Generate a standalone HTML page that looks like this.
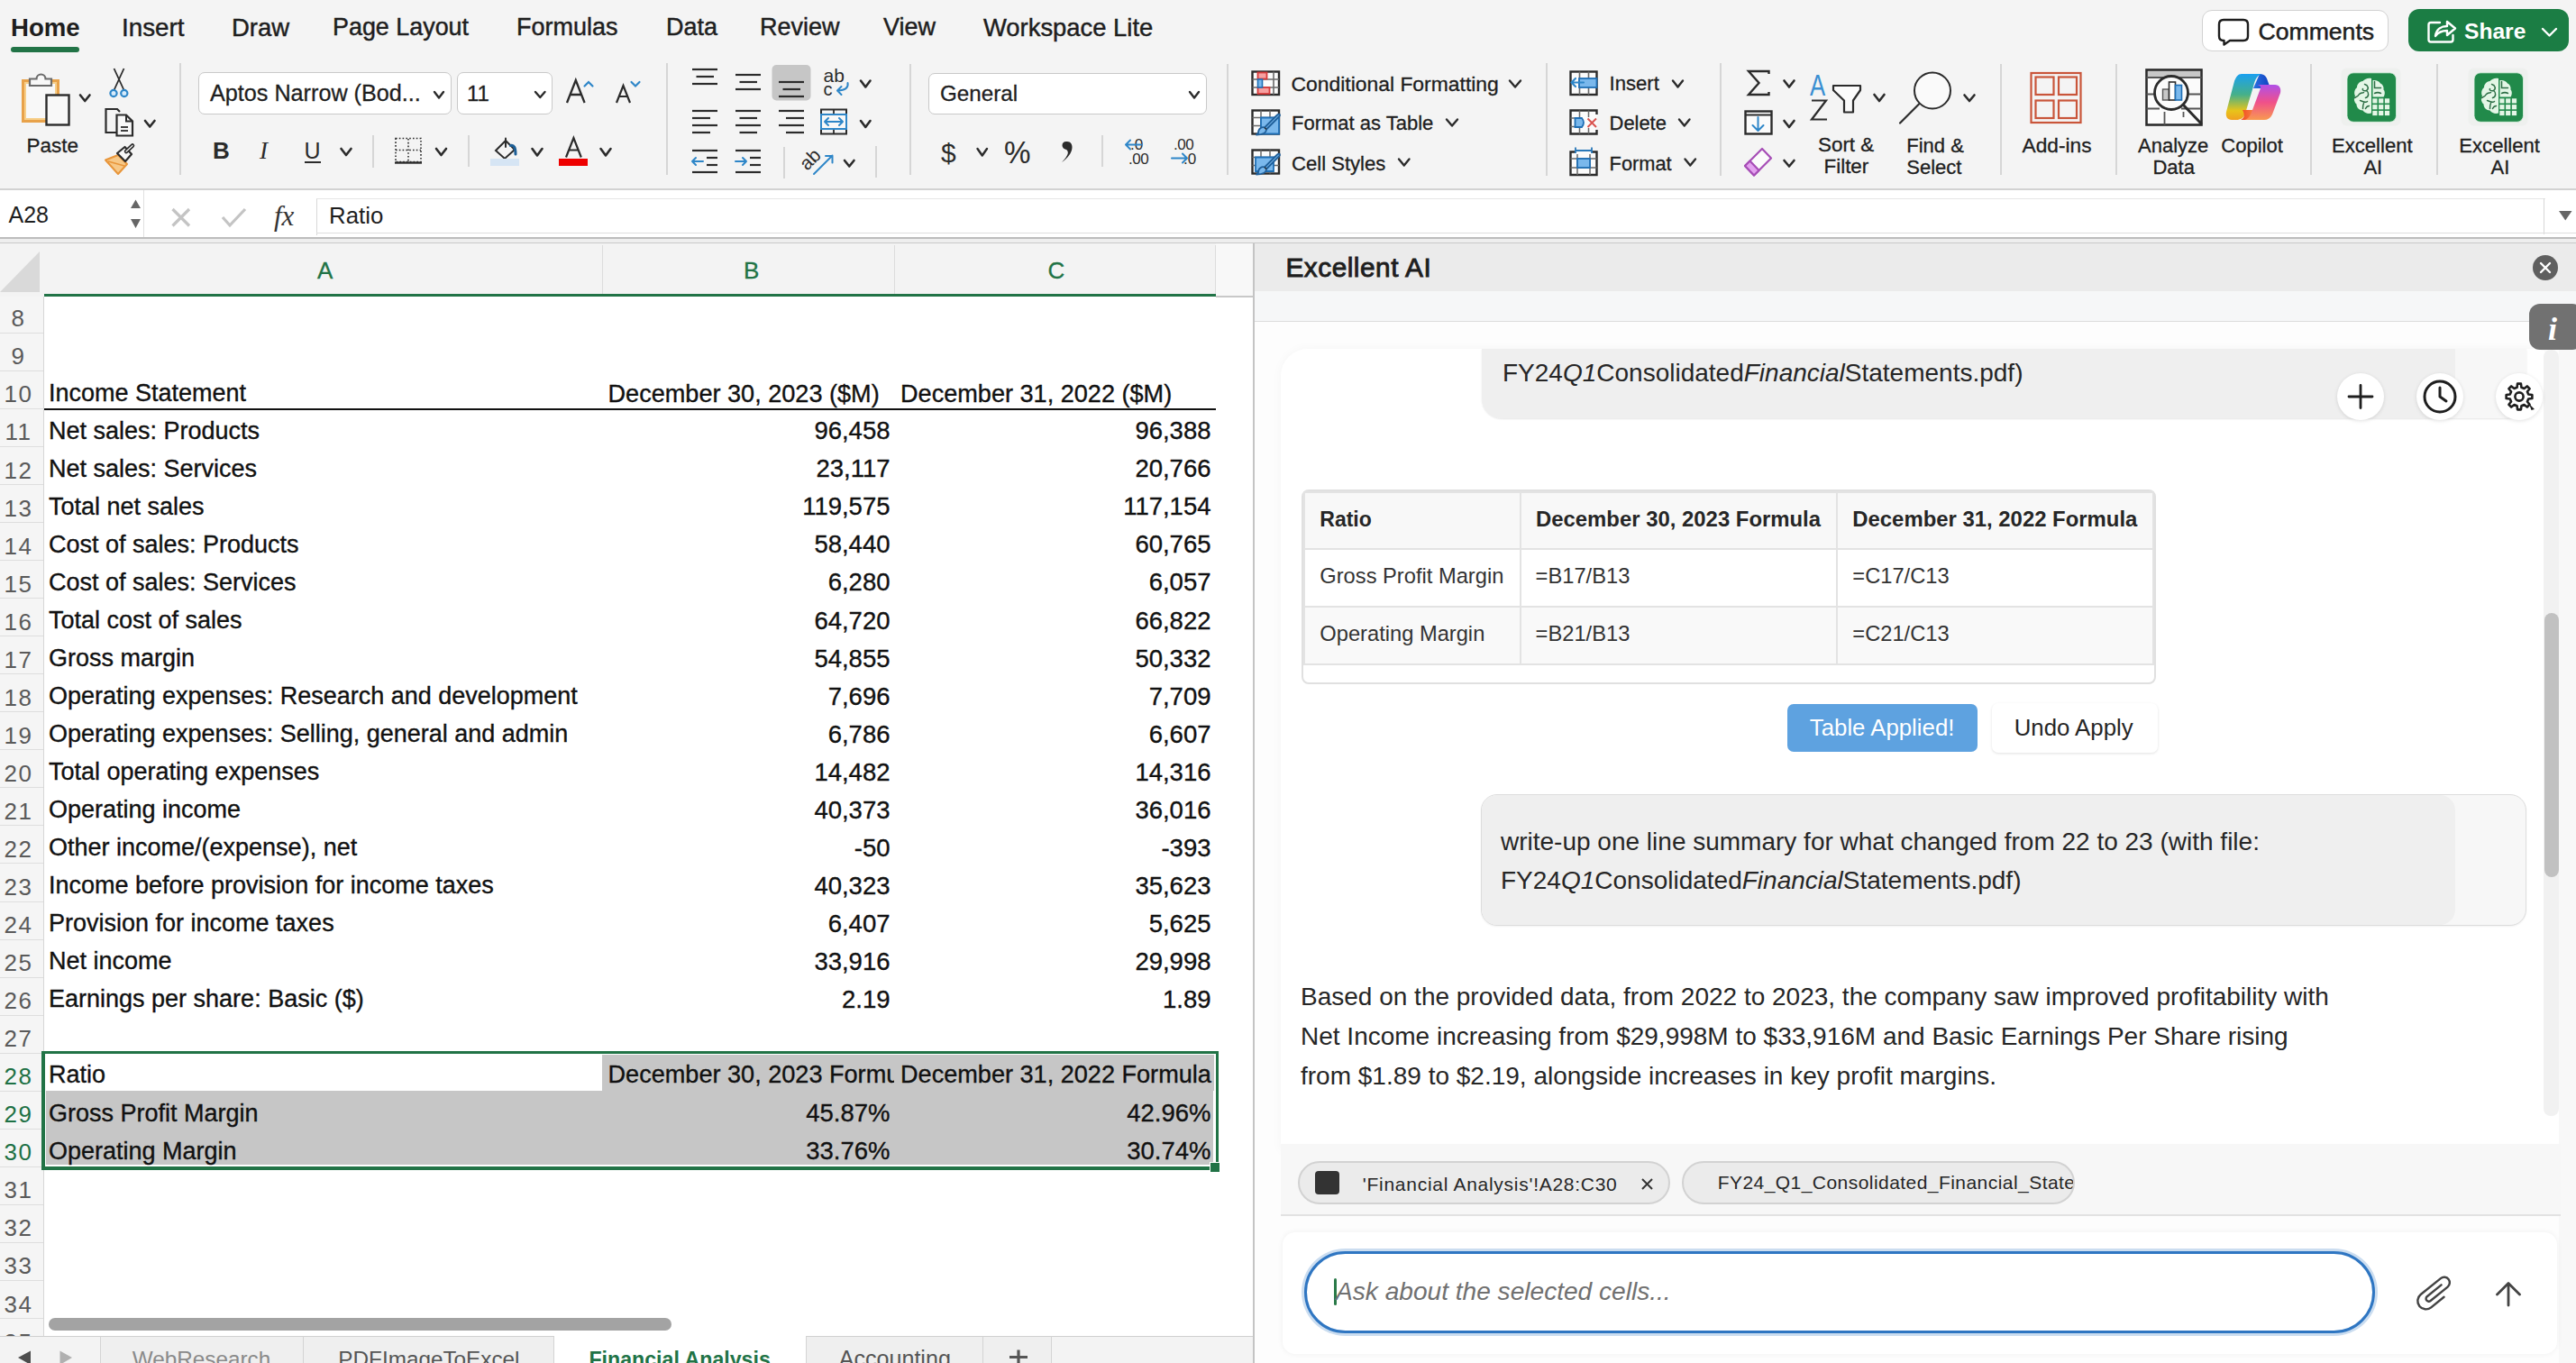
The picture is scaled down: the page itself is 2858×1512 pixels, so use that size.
<!DOCTYPE html><html><head><meta charset="utf-8"><style>
html,body{margin:0;padding:0;}
body{width:2858px;height:1512px;overflow:hidden;position:relative;background:#f4f4f4;font-family:"Liberation Sans",sans-serif;}
.t{position:absolute;white-space:nowrap;}
.r{position:absolute;}
svg.r{overflow:visible;}
</style></head><body>
<div class="t" style="left:12.0px;top:16.6px;font-size:27.6px;line-height:27.6px;color:#1e1e1e;font-weight:bold;font-style:normal;">Home</div>
<div class="t" style="left:135.0px;top:16.5px;font-size:27.8px;line-height:27.8px;color:#1e1e1e;font-weight:normal;font-style:normal;-webkit-text-stroke:0.45px #1e1e1e">Insert</div>
<div class="t" style="left:257.0px;top:16.7px;font-size:27.5px;line-height:27.5px;color:#1e1e1e;font-weight:normal;font-style:normal;-webkit-text-stroke:0.45px #1e1e1e">Draw</div>
<div class="t" style="left:369.0px;top:17.2px;font-size:26.9px;line-height:26.9px;color:#1e1e1e;font-weight:normal;font-style:normal;-webkit-text-stroke:0.45px #1e1e1e">Page Layout</div>
<div class="t" style="left:573.0px;top:17.1px;font-size:27px;line-height:27px;color:#1e1e1e;font-weight:normal;font-style:normal;-webkit-text-stroke:0.45px #1e1e1e">Formulas</div>
<div class="t" style="left:739.0px;top:17.1px;font-size:27px;line-height:27px;color:#1e1e1e;font-weight:normal;font-style:normal;-webkit-text-stroke:0.45px #1e1e1e">Data</div>
<div class="t" style="left:843.0px;top:17.1px;font-size:27px;line-height:27px;color:#1e1e1e;font-weight:normal;font-style:normal;-webkit-text-stroke:0.45px #1e1e1e">Review</div>
<div class="t" style="left:980.0px;top:17.1px;font-size:27px;line-height:27px;color:#1e1e1e;font-weight:normal;font-style:normal;-webkit-text-stroke:0.45px #1e1e1e">View</div>
<div class="t" style="left:1091.0px;top:16.8px;font-size:27.4px;line-height:27.4px;color:#1e1e1e;font-weight:normal;font-style:normal;-webkit-text-stroke:0.45px #1e1e1e">Workspace Lite</div>
<div class="r" style="left:12px;top:52px;width:76px;height:6px;background:#217346;border-radius:3px"></div>
<div class="r" style="left:199px;top:70px;width:2px;height:124px;background:#d6d6d6"></div>
<div class="r" style="left:739px;top:70px;width:2px;height:124px;background:#d6d6d6"></div>
<div class="r" style="left:1009px;top:71px;width:2px;height:123px;background:#d6d6d6"></div>
<div class="r" style="left:1361px;top:71px;width:2px;height:123px;background:#d6d6d6"></div>
<div class="r" style="left:1715px;top:70px;width:2px;height:125px;background:#d6d6d6"></div>
<div class="r" style="left:1908px;top:70px;width:2px;height:125px;background:#d6d6d6"></div>
<div class="r" style="left:2219px;top:71px;width:2px;height:123px;background:#d6d6d6"></div>
<div class="r" style="left:2347px;top:71px;width:2px;height:123px;background:#d6d6d6"></div>
<div class="r" style="left:2563px;top:71px;width:2px;height:123px;background:#d6d6d6"></div>
<div class="r" style="left:2703px;top:71px;width:2px;height:123px;background:#d6d6d6"></div>
<div class="r" style="left:413px;top:150px;width:2px;height:36px;background:#d6d6d6"></div>
<div class="r" style="left:519px;top:150px;width:2px;height:35px;background:#d6d6d6"></div>
<div class="r" style="left:869px;top:163px;width:2px;height:35px;background:#d6d6d6"></div>
<div class="r" style="left:971px;top:162px;width:2px;height:35px;background:#d6d6d6"></div>
<div class="r" style="left:1222px;top:150px;width:2px;height:35px;background:#d6d6d6"></div>
<div class="t" style="left:29.5px;top:150.5px;font-size:22.5px;line-height:22.5px;color:#1e1e1e;font-weight:normal;font-style:normal;-webkit-text-stroke:0.3px #1e1e1e">Paste</div>
<div class="r" style="left:220px;top:80px;width:281px;height:47px;background:#fff;border:1px solid #c9c9c9;border-radius:7px;box-sizing:border-box"></div>
<div class="t" style="left:233.0px;top:91.2px;font-size:25.2px;line-height:25.2px;color:#1e1e1e;font-weight:normal;font-style:normal;-webkit-text-stroke:0.3px #1e1e1e">Aptos Narrow (Bod...</div>
<div class="r" style="left:507px;top:80px;width:106px;height:47px;background:#fff;border:1px solid #c9c9c9;border-radius:7px;box-sizing:border-box"></div>
<div class="t" style="left:518.0px;top:91.7px;font-size:24px;line-height:24px;color:#1e1e1e;font-weight:normal;font-style:normal;-webkit-text-stroke:0.3px #1e1e1e">11</div>
<div class="r" style="left:1030px;top:81px;width:309px;height:46px;background:#fff;border:1px solid #c9c9c9;border-radius:7px;box-sizing:border-box"></div>
<div class="t" style="left:1043.0px;top:91.8px;font-size:24.2px;line-height:24.2px;color:#1e1e1e;font-weight:normal;font-style:normal;-webkit-text-stroke:0.3px #1e1e1e">General</div>
<div class="t" style="left:1432.5px;top:81.6px;font-size:22.9px;line-height:22.9px;color:#1e1e1e;font-weight:normal;font-style:normal;-webkit-text-stroke:0.3px #1e1e1e">Conditional Formatting</div>
<div class="t" style="left:1433.0px;top:126.0px;font-size:22px;line-height:22px;color:#1e1e1e;font-weight:normal;font-style:normal;-webkit-text-stroke:0.3px #1e1e1e">Format as Table</div>
<div class="t" style="left:1433.0px;top:170.5px;font-size:22.1px;line-height:22.1px;color:#1e1e1e;font-weight:normal;font-style:normal;-webkit-text-stroke:0.3px #1e1e1e">Cell Styles</div>
<div class="t" style="left:1785.6px;top:81.8px;font-size:22.1px;line-height:22.1px;color:#1e1e1e;font-weight:normal;font-style:normal;-webkit-text-stroke:0.3px #1e1e1e">Insert</div>
<div class="t" style="left:1785.6px;top:126.1px;font-size:21.9px;line-height:21.9px;color:#1e1e1e;font-weight:normal;font-style:normal;-webkit-text-stroke:0.3px #1e1e1e">Delete</div>
<div class="t" style="left:1785.6px;top:170.7px;font-size:21.8px;line-height:21.8px;color:#1e1e1e;font-weight:normal;font-style:normal;-webkit-text-stroke:0.3px #1e1e1e">Format</div>
<div class="t" style="left:2017.0px;top:150.2px;font-size:22.4px;line-height:22.4px;color:#1e1e1e;font-weight:normal;font-style:normal;-webkit-text-stroke:0.3px #1e1e1e">Sort &amp;</div>
<div class="t" style="left:2023.5px;top:174.2px;font-size:22.4px;line-height:22.4px;color:#1e1e1e;font-weight:normal;font-style:normal;-webkit-text-stroke:0.3px #1e1e1e">Filter</div>
<div class="t" style="left:2115.3px;top:150.9px;font-size:22px;line-height:22px;color:#1e1e1e;font-weight:normal;font-style:normal;-webkit-text-stroke:0.3px #1e1e1e">Find &amp;</div>
<div class="t" style="left:2115.3px;top:174.6px;font-size:22px;line-height:22px;color:#1e1e1e;font-weight:normal;font-style:normal;-webkit-text-stroke:0.3px #1e1e1e">Select</div>
<div class="t" style="left:2243.6px;top:150.3px;font-size:22.7px;line-height:22.7px;color:#1e1e1e;font-weight:normal;font-style:normal;-webkit-text-stroke:0.3px #1e1e1e">Add-ins</div>
<div class="t" style="left:2372.0px;top:150.9px;font-size:22px;line-height:22px;color:#1e1e1e;font-weight:normal;font-style:normal;-webkit-text-stroke:0.3px #1e1e1e">Analyze</div>
<div class="t" style="left:2388.4px;top:174.6px;font-size:22px;line-height:22px;color:#1e1e1e;font-weight:normal;font-style:normal;-webkit-text-stroke:0.3px #1e1e1e">Data</div>
<div class="t" style="left:2464.3px;top:150.9px;font-size:22px;line-height:22px;color:#1e1e1e;font-weight:normal;font-style:normal;-webkit-text-stroke:0.3px #1e1e1e">Copilot</div>
<div class="t" style="left:2587.0px;top:150.8px;font-size:22.1px;line-height:22.1px;color:#1e1e1e;font-weight:normal;font-style:normal;-webkit-text-stroke:0.3px #1e1e1e">Excellent</div>
<div class="t" style="left:2622.4px;top:174.6px;font-size:22px;line-height:22px;color:#1e1e1e;font-weight:normal;font-style:normal;-webkit-text-stroke:0.3px #1e1e1e">AI</div>
<div class="t" style="left:2728.3px;top:150.8px;font-size:22.1px;line-height:22.1px;color:#1e1e1e;font-weight:normal;font-style:normal;-webkit-text-stroke:0.3px #1e1e1e">Excellent</div>
<div class="t" style="left:2763.6px;top:174.6px;font-size:22px;line-height:22px;color:#1e1e1e;font-weight:normal;font-style:normal;-webkit-text-stroke:0.3px #1e1e1e">AI</div>
<div class="r" style="left:2443px;top:11px;width:207px;height:46px;background:#fff;border:1.5px solid #d2d2d2;border-radius:11px;box-sizing:border-box"></div>
<div class="t" style="left:2505.5px;top:22.0px;font-size:26.6px;line-height:26.6px;color:#1e1e1e;font-weight:normal;font-style:normal;-webkit-text-stroke:0.5px #1e1e1e">Comments</div>
<div class="r" style="left:2672px;top:10px;width:178px;height:47px;background:#1b7d44;border-radius:12px"></div>
<div class="t" style="left:2734.0px;top:22.8px;font-size:24.6px;line-height:24.6px;color:#ffffff;font-weight:bold;font-style:normal;">Share</div>
<div class="r" style="left:0px;top:209px;width:2858px;height:2px;background:#d2d2d2"></div>
<div class="r" style="left:0px;top:211px;width:2858px;height:52px;background:#ffffff"></div>
<div class="r" style="left:159px;top:211px;width:1px;height:52px;background:#e0e0e0"></div>
<div class="t" style="left:9.5px;top:226.3px;font-size:25px;line-height:25px;color:#1e1e1e;font-weight:normal;font-style:normal;">A28</div>
<div class="r" style="left:351px;top:220px;width:2472px;height:40px;background:#fff;border-left:1px solid #d8d8d8;border-top:1px solid #e6e6e6"></div>
<div class="t" style="left:365.0px;top:226.7px;font-size:25.8px;line-height:25.8px;color:#1e1e1e;font-weight:normal;font-style:normal;">Ratio</div>
<div class="r" style="left:2822px;top:220px;width:1px;height:40px;background:#d8d8d8"></div>
<div class="r" style="left:351px;top:258px;width:2507px;height:1px;background:#dedede"></div>
<svg class="r" style="left:0;top:0" width="2858" height="262"><rect x="25.5" y="89.5" width="39" height="45" fill="#f8f8f8" stroke="#e8a24a" stroke-width="3"/><rect x="28" y="92" width="34" height="40" fill="none" stroke="#f7cf8a" stroke-width="2"/><path d="M33 95 V87.5 H40.5 A5 5 0 0 1 50.5 87.5 H57 V95 Z" fill="#f8f8f8" stroke="#6b6b6b" stroke-width="2.2"/><rect x="51.5" y="105.5" width="25" height="33" fill="#f8f8f8" stroke="#2b2b2b" stroke-width="2.4"/><path d="M89 105.5 L94.25 112 L99.5 105.5" fill="none" stroke="#2b2b2b" stroke-width="2.6" stroke-linecap="round" stroke-linejoin="round"/><line x1="126.5" y1="76" x2="137.5" y2="100" stroke="#2b2b2b" stroke-width="1.8" stroke-linecap="butt"/><line x1="137.5" y1="76" x2="126.5" y2="100" stroke="#2b2b2b" stroke-width="1.8" stroke-linecap="butt"/><circle cx="126" cy="103.5" r="3.6" fill="#d7ebfb" stroke="#2e86c8" stroke-width="2.2"/><circle cx="137.8" cy="103.5" r="3.6" fill="#d7ebfb" stroke="#2e86c8" stroke-width="2.2"/><path d="M129 147 H117.5 V121 H130 L133 124" fill="none" stroke="#2b2b2b" stroke-width="2.2"/><path d="M129.5 127.5 H140 L147 134.5 V150.5 H129.5 Z" fill="#f8f8f8" stroke="#2b2b2b" stroke-width="2.2"/><path d="M140 127.5 V134.5 H147" fill="none" stroke="#2b2b2b" stroke-width="2"/><line x1="134" y1="141" x2="142" y2="141" stroke="#2b2b2b" stroke-width="1.8" stroke-linecap="butt"/><line x1="134" y1="145" x2="142" y2="145" stroke="#2b2b2b" stroke-width="1.8" stroke-linecap="butt"/><path d="M161 134 L166.25 140.5 L171.5 134" fill="none" stroke="#2b2b2b" stroke-width="2.6" stroke-linecap="round" stroke-linejoin="round"/><path d="M117 177.5 L131 172 L141 182 L131 193 Z" fill="#f7c887" stroke="#e8953a" stroke-width="2" stroke-linejoin="round"/><path d="M120 179 L138 184" stroke="#e8953a" stroke-width="1.6"/><path d="M130 170 L138.5 163 L146 171 L139 179 Z" fill="#f8f8f8" stroke="#2b2b2b" stroke-width="2.2" stroke-linejoin="round"/><path d="M140 168 L147 161.5" stroke="#2b2b2b" stroke-width="4.5" stroke-linecap="round"/><path d="M140 168 L147 161.5" stroke="#f8f8f8" stroke-width="1.2" stroke-linecap="round"/><path d="M482 102 L487.0 108.5 L492 102" fill="none" stroke="#2b2b2b" stroke-width="2.4" stroke-linecap="round" stroke-linejoin="round"/><path d="M594 102 L599.25 108 L604.5 102" fill="none" stroke="#2b2b2b" stroke-width="2.4" stroke-linecap="round" stroke-linejoin="round"/><path d="M629 114 L638.8 89 L648.6 114 M632.6 105 H645" fill="none" stroke="#2b2b2b" stroke-width="2.3" stroke-linejoin="miter"/><path d="M648.5 95.5 L653 91 L657.5 95.5" fill="none" stroke="#2e86c8" stroke-width="2.2" stroke-linecap="round"/><path d="M684 114 L691.5 95 L699 114 M686.8 107 H696.2" fill="none" stroke="#2b2b2b" stroke-width="2.2"/><path d="M700.5 91 L705 95.5 L709.5 91" fill="none" stroke="#2e86c8" stroke-width="2.2" stroke-linecap="round"/><text x="236" y="176" font-family="Liberation Sans" font-weight="bold" font-size="26" fill="#2b2b2b">B</text><text x="288" y="176" font-family="Liberation Serif" font-style="italic" font-size="27" fill="#2b2b2b">I</text><text x="337.5" y="176" font-family="Liberation Sans" font-size="25" fill="#2b2b2b">U</text><line x1="338" y1="180" x2="356" y2="180" stroke="#2b2b2b" stroke-width="2" stroke-linecap="butt"/><path d="M378.5 165 L384.0 172 L389.5 165" fill="none" stroke="#2b2b2b" stroke-width="2.6" stroke-linecap="round" stroke-linejoin="round"/><rect x="439" y="153.5" width="28" height="26" fill="none" stroke="#2b2b2b" stroke-width="1.6" stroke-dasharray="1.6 2.2"/><path d="M453 154 V180 M439 166.5 H467" stroke="#2b2b2b" stroke-width="1.6" stroke-dasharray="1.6 2.2"/><line x1="438" y1="180.5" x2="468" y2="180.5" stroke="#2b2b2b" stroke-width="2.4" stroke-linecap="butt"/><path d="M484 165 L489.5 172 L495 165" fill="none" stroke="#2b2b2b" stroke-width="2.6" stroke-linecap="round" stroke-linejoin="round"/><path d="M550 167 L561 156 L571 166 L560 176 Z" fill="none" stroke="#2b2b2b" stroke-width="2"/><path d="M561 163 V153.5" stroke="#2b2b2b" stroke-width="2" stroke-linecap="round"/><path d="M566.5 161.5 Q572 160 572 171" fill="none" stroke="#1d5f96" stroke-width="3" stroke-linecap="round"/><rect x="544" y="176" width="32" height="8" fill="#d6e5f4"/><path d="M590.5 165 L596.0 172.5 L601.5 165" fill="none" stroke="#2b2b2b" stroke-width="2.6" stroke-linecap="round" stroke-linejoin="round"/><path d="M628 174.5 L636.4 153 L644.8 174.5 M631.2 166.5 H641.6" fill="none" stroke="#2b2b2b" stroke-width="2.2"/><rect x="620" y="176" width="32" height="8" fill="#ee0000"/><path d="M666.5 165 L672.0 172.5 L677.5 165" fill="none" stroke="#2b2b2b" stroke-width="2.6" stroke-linecap="round" stroke-linejoin="round"/><line x1="768" y1="77" x2="796" y2="77" stroke="#2b2b2b" stroke-width="2.2" stroke-linecap="butt"/><line x1="772.5" y1="85" x2="792" y2="85" stroke="#2b2b2b" stroke-width="2.2" stroke-linecap="butt"/><line x1="768" y1="93" x2="796" y2="93" stroke="#2b2b2b" stroke-width="2.2" stroke-linecap="butt"/><line x1="816" y1="83" x2="844" y2="83" stroke="#2b2b2b" stroke-width="2.2" stroke-linecap="butt"/><line x1="820.5" y1="91" x2="840" y2="91" stroke="#2b2b2b" stroke-width="2.2" stroke-linecap="butt"/><line x1="816" y1="99" x2="844" y2="99" stroke="#2b2b2b" stroke-width="2.2" stroke-linecap="butt"/><rect x="856.5" y="72" width="43" height="39.5" rx="5" fill="#c6c6c6"/><line x1="864" y1="91" x2="892" y2="91" stroke="#2b2b2b" stroke-width="2.2" stroke-linecap="butt"/><line x1="868.5" y1="99" x2="888" y2="99" stroke="#2b2b2b" stroke-width="2.2" stroke-linecap="butt"/><line x1="864" y1="107" x2="892" y2="107" stroke="#2b2b2b" stroke-width="2.2" stroke-linecap="butt"/><text x="913.5" y="91.2" font-family="Liberation Sans" font-size="21" fill="#2b2b2b">ab</text><text x="913.5" y="105.6" font-family="Liberation Sans" font-size="20" fill="#2b2b2b">c</text><path d="M940.5 92 Q942 100 929.5 100.5 M933.5 96 L929 100.5 L933.5 105" fill="none" stroke="#2e86c8" stroke-width="2" stroke-linecap="round" stroke-linejoin="round"/><path d="M955 89.5 L960.25 96.5 L965.5 89.5" fill="none" stroke="#2b2b2b" stroke-width="2.6" stroke-linecap="round" stroke-linejoin="round"/><line x1="768" y1="123" x2="796" y2="123" stroke="#2b2b2b" stroke-width="2.2" stroke-linecap="butt"/><line x1="768" y1="131" x2="788" y2="131" stroke="#2b2b2b" stroke-width="2.2" stroke-linecap="butt"/><line x1="768" y1="139" x2="796" y2="139" stroke="#2b2b2b" stroke-width="2.2" stroke-linecap="butt"/><line x1="768" y1="147" x2="788" y2="147" stroke="#2b2b2b" stroke-width="2.2" stroke-linecap="butt"/><line x1="816" y1="123" x2="844" y2="123" stroke="#2b2b2b" stroke-width="2.2" stroke-linecap="butt"/><line x1="820.5" y1="131" x2="840" y2="131" stroke="#2b2b2b" stroke-width="2.2" stroke-linecap="butt"/><line x1="816" y1="139" x2="844" y2="139" stroke="#2b2b2b" stroke-width="2.2" stroke-linecap="butt"/><line x1="820.5" y1="147" x2="840" y2="147" stroke="#2b2b2b" stroke-width="2.2" stroke-linecap="butt"/><line x1="864" y1="123" x2="892" y2="123" stroke="#2b2b2b" stroke-width="2.2" stroke-linecap="butt"/><line x1="872" y1="131" x2="892" y2="131" stroke="#2b2b2b" stroke-width="2.2" stroke-linecap="butt"/><line x1="864" y1="139" x2="892" y2="139" stroke="#2b2b2b" stroke-width="2.2" stroke-linecap="butt"/><line x1="872" y1="147" x2="892" y2="147" stroke="#2b2b2b" stroke-width="2.2" stroke-linecap="butt"/><rect x="911" y="121.5" width="28" height="27" fill="none" stroke="#2b2b2b" stroke-width="2"/><line x1="925" y1="121.5" x2="925" y2="127" stroke="#2b2b2b" stroke-width="1.8" stroke-linecap="butt"/><line x1="925" y1="143" x2="925" y2="148.5" stroke="#2b2b2b" stroke-width="1.8" stroke-linecap="butt"/><rect x="911" y="127" width="28" height="16" fill="#f8f8f8" stroke="#2e86c8" stroke-width="2"/><path d="M915 135 H935 M919 131 L915 135 L919 139 M931 131 L935 135 L931 139" fill="none" stroke="#2e86c8" stroke-width="2" stroke-linecap="round" stroke-linejoin="round"/><path d="M955 134 L960.25 141 L965.5 134" fill="none" stroke="#2b2b2b" stroke-width="2.6" stroke-linecap="round" stroke-linejoin="round"/><line x1="768" y1="167" x2="796" y2="167" stroke="#2b2b2b" stroke-width="2.2" stroke-linecap="butt"/><line x1="784" y1="175" x2="796" y2="175" stroke="#2b2b2b" stroke-width="2.2" stroke-linecap="butt"/><line x1="784" y1="183" x2="796" y2="183" stroke="#2b2b2b" stroke-width="2.2" stroke-linecap="butt"/><line x1="768" y1="191" x2="796" y2="191" stroke="#2b2b2b" stroke-width="2.2" stroke-linecap="butt"/><path d="M768 179 H780 M772 175 L768 179 L772 183" fill="none" stroke="#2e86c8" stroke-width="2" stroke-linecap="round" stroke-linejoin="round"/><line x1="816" y1="167" x2="844" y2="167" stroke="#2b2b2b" stroke-width="2.2" stroke-linecap="butt"/><line x1="832" y1="175" x2="844" y2="175" stroke="#2b2b2b" stroke-width="2.2" stroke-linecap="butt"/><line x1="832" y1="183" x2="844" y2="183" stroke="#2b2b2b" stroke-width="2.2" stroke-linecap="butt"/><line x1="816" y1="191" x2="844" y2="191" stroke="#2b2b2b" stroke-width="2.2" stroke-linecap="butt"/><path d="M816 179 H828 M824 175 L828 179 L824 183" fill="none" stroke="#2e86c8" stroke-width="2" stroke-linecap="round" stroke-linejoin="round"/><text x="0" y="0" font-family="Liberation Sans" font-size="21" fill="#2b2b2b" transform="translate(895.5 190) rotate(-45)">ab</text><path d="M903 193 L923.5 172.5 M916 173 H923.5 V180.5" fill="none" stroke="#2e86c8" stroke-width="2" stroke-linecap="round" stroke-linejoin="round"/><path d="M937 178 L942.25 184.5 L947.5 178" fill="none" stroke="#2b2b2b" stroke-width="2.6" stroke-linecap="round" stroke-linejoin="round"/><path d="M1320 102 L1325.0 108.5 L1330 102" fill="none" stroke="#2b2b2b" stroke-width="2.4" stroke-linecap="round" stroke-linejoin="round"/><text x="1044" y="180" font-family="Liberation Sans" font-size="30" fill="#2b2b2b">$</text><path d="M1084.5 165 L1089.75 172.5 L1095 165" fill="none" stroke="#2b2b2b" stroke-width="2.4" stroke-linecap="round" stroke-linejoin="round"/><text x="1114" y="181.5" font-family="Liberation Sans" font-size="35" fill="#2b2b2b" transform="translate(1114 181.5) scale(0.95 1) translate(-1114 -181.5)">%</text><path d="M1183 157 C1192 156 1193 170 1178 180 C1186 172 1186 168 1183 166 C1177 165 1177 157 1183 157 Z" fill="#2b2b2b"/><text x="1254" y="165.5" font-family="Liberation Sans" font-size="17" fill="#2b2b2b">.0</text><text x="1252" y="182" font-family="Liberation Sans" font-size="17" fill="#2b2b2b" letter-spacing="-0.5">.00</text><path d="M1266 160.5 H1249 M1254 155.5 L1249 160.5 L1254 165.5" fill="none" stroke="#2e86c8" stroke-width="2" stroke-linecap="round" stroke-linejoin="round"/><text x="1302" y="165.5" font-family="Liberation Sans" font-size="17" fill="#2b2b2b" letter-spacing="-0.5">.00</text><text x="1313" y="182" font-family="Liberation Sans" font-size="17" fill="#2b2b2b">.0</text><path d="M1300 175.5 H1317 M1312 170.5 L1317 175.5 L1312 180.5" fill="none" stroke="#2e86c8" stroke-width="2" stroke-linecap="round" stroke-linejoin="round"/><rect x="1389.5" y="79.5" width="29.5" height="25.5" fill="#fbfbfb" stroke="#2b2b2b" stroke-width="2.4"/><path d="M1389.5 88 H1419 M1389.5 97 H1419 M1413 79.5 V105" stroke="#6a6a6a" stroke-width="1.6"/><rect x="1395.5" y="80.5" width="10" height="7" fill="#f6a0a0" stroke="#d63b3b" stroke-width="1.8"/><rect x="1395.5" y="97" width="13" height="7" fill="#f6a0a0" stroke="#d63b3b" stroke-width="1.8"/><rect x="1395.5" y="88" width="5" height="9" fill="#7ab8ec" stroke="#1f6fb5" stroke-width="1.6"/><rect x="1389.5" y="122.5" width="29.5" height="26" fill="#fbfbfb" stroke="#2b2b2b" stroke-width="2.4"/><path d="M1389.5 130.5 H1419 M1389.5 139.5 H1419 M1399 122.5 V148.5 M1409 122.5 V148.5" stroke="#6a6a6a" stroke-width="1.5"/><path d="M1399 130.5 H1419 V148.5 H1399 Z" fill="#7ab8ec" stroke="#1f6fb5" stroke-width="1.8"/><path d="M1396 147.5 C1396 142.5 1400 140.5 1403 141.5 L1417 127.5 C1420 125.5 1421 127.5 1419 129.5 L1405 143.5 C1405 147.5 1400 149.5 1394 149.5 Z" fill="#7ab8ec" stroke="#1f5f9a" stroke-width="1.8" stroke-linejoin="round"/><path d="M1403 141.5 L1405 143.5" stroke="#2b2b2b" stroke-width="1.5"/><rect x="1389.5" y="166.5" width="29.5" height="26" fill="#fbfbfb" stroke="#2b2b2b" stroke-width="2.4"/><path d="M1389.5 174.5 H1419 M1389.5 183.5 H1419 M1399 166.5 V192.5 M1409 166.5 V192.5" stroke="#6a6a6a" stroke-width="1.5"/><path d="M1393 174.5 H1413 V190 H1393 Z" fill="#7ab8ec" stroke="#1f6fb5" stroke-width="1.8"/><path d="M1396 191.5 C1396 186.5 1400 184.5 1403 185.5 L1417 171.5 C1420 169.5 1421 171.5 1419 173.5 L1405 187.5 C1405 191.5 1400 193.5 1394 193.5 Z" fill="#7ab8ec" stroke="#1f5f9a" stroke-width="1.8" stroke-linejoin="round"/><path d="M1403 185.5 L1405 187.5" stroke="#2b2b2b" stroke-width="1.5"/><path d="M1675 89.5 L1681.0 96.5 L1687 89.5" fill="none" stroke="#2b2b2b" stroke-width="2.4" stroke-linecap="round" stroke-linejoin="round"/><path d="M1605 132.5 L1611.0 139.5 L1617 132.5" fill="none" stroke="#2b2b2b" stroke-width="2.4" stroke-linecap="round" stroke-linejoin="round"/><path d="M1552 176.5 L1557.75 183.5 L1563.5 176.5" fill="none" stroke="#2b2b2b" stroke-width="2.4" stroke-linecap="round" stroke-linejoin="round"/><rect x="1742.5" y="79.5" width="29" height="25.5" fill="#fbfbfb" stroke="#2b2b2b" stroke-width="2.4"/><path d="M1752.5 79.5 V105 M1762.5 79.5 V105" stroke="#6a6a6a" stroke-width="1.6"/><rect x="1752" y="87" width="19.5" height="10" fill="#7ab8ec" stroke="#1f6fb5" stroke-width="1.8"/><path d="M1757 91.5 H1743.5 M1748 87 L1743.5 91.5 L1748 96" fill="none" stroke="#2e86c8" stroke-width="2.2" stroke-linecap="round" stroke-linejoin="round"/><path d="M1771.5 127 V122.5 H1742.5 V148.5 H1771.5 V144" fill="#fbfbfb" stroke="#2b2b2b" stroke-width="2.4"/><path d="M1742.5 131 H1750 M1742.5 140.5 H1750 M1752.5 122.5 V148.5 M1762.5 122.5 V130 M1762.5 142 V148.5" stroke="#6a6a6a" stroke-width="1.5"/><path d="M1747.5 131 H1755 Q1759 136 1755 141 H1747.5 Z" fill="#7ab8ec" stroke="#1f6fb5" stroke-width="1.8"/><path d="M1761.5 131.5 L1771 141 M1771 131.5 L1761.5 141" stroke="#d9534f" stroke-width="2"/><path d="M1748 168.5 H1742.5 V194 H1771.5 V168.5 H1766" fill="#fbfbfb" stroke="#2b2b2b" stroke-width="2.4"/><path d="M1742.5 176 H1771.5 M1742.5 186 H1771.5 M1750 171 V194 M1764 171 V194" stroke="#6a6a6a" stroke-width="1.5"/><rect x="1750" y="176" width="14" height="10" fill="#7ab8ec" stroke="#1f6fb5" stroke-width="1.8"/><path d="M1748 167 H1766 M1748 163.5 V170 M1766 163.5 V170" stroke="#2a78b8" stroke-width="1.8"/><path d="M1856 89.5 L1861.5 96.5 L1867 89.5" fill="none" stroke="#2b2b2b" stroke-width="2.4" stroke-linecap="round" stroke-linejoin="round"/><path d="M1863 132.5 L1868.75 139.5 L1874.5 132.5" fill="none" stroke="#2b2b2b" stroke-width="2.4" stroke-linecap="round" stroke-linejoin="round"/><path d="M1869.5 176.5 L1875.25 183.5 L1881 176.5" fill="none" stroke="#2b2b2b" stroke-width="2.4" stroke-linecap="round" stroke-linejoin="round"/><path d="M1962.5 82 V79 H1940 L1951.5 92 L1940 105 H1962.5 V102" fill="none" stroke="#2b2b2b" stroke-width="2.4" stroke-linejoin="miter"/><path d="M1979.5 89.5 L1985.0 96.5 L1990.5 89.5" fill="none" stroke="#2b2b2b" stroke-width="2.6" stroke-linecap="round" stroke-linejoin="round"/><rect x="1936.5" y="123.5" width="29" height="25" fill="#fbfbfb" stroke="#2b2b2b" stroke-width="2.4"/><line x1="1936.5" y1="127.5" x2="1965.5" y2="127.5" stroke="#2b2b2b" stroke-width="2" stroke-linecap="butt"/><path d="M1950.5 130 V145 M1944.5 139 L1950.5 145 L1956.5 139" fill="none" stroke="#2e86c8" stroke-width="2" stroke-linecap="round" stroke-linejoin="round"/><path d="M1979.5 134 L1985.0 141 L1990.5 134" fill="none" stroke="#2b2b2b" stroke-width="2.6" stroke-linecap="round" stroke-linejoin="round"/><path d="M1936 184 L1955 165 L1965 175.5 L1946 194.5 Z" fill="#fbfbfb" stroke="#a64db6" stroke-width="2.2" stroke-linejoin="round"/><path d="M1936 184 L1941.5 178.5 L1951.5 189 L1946 194.5 Z" fill="#e4a2f0" stroke="#a64db6" stroke-width="2.2" stroke-linejoin="round"/><path d="M1979.5 178 L1985.0 184.5 L1990.5 178" fill="none" stroke="#2b2b2b" stroke-width="2.6" stroke-linecap="round" stroke-linejoin="round"/><text x="2008" y="106" font-family="Liberation Sans" font-size="33" fill="#3a8fd2" transform="translate(2008 106) scale(0.78 1) translate(-2008 -106)">A</text><path d="M2010 111.5 H2026 L2010 132.5 H2027" fill="none" stroke="#2b2b2b" stroke-width="2.2"/><path d="M2034 95 H2064 V100 L2056 111.5 V124.5 H2046 V111.5 L2034 100 Z" fill="#fbfbfb" stroke="#2b2b2b" stroke-width="2.2" stroke-linejoin="round"/><path d="M2079.5 105 L2085.0 112 L2090.5 105" fill="none" stroke="#2b2b2b" stroke-width="2.6" stroke-linecap="round" stroke-linejoin="round"/><circle cx="2144" cy="100.5" r="20" fill="#fafafa" stroke="#2b2b2b" stroke-width="2"/><line x1="2129" y1="115.5" x2="2108" y2="136.5" stroke="#2b2b2b" stroke-width="2.2" stroke-linecap="round"/><path d="M2179.5 105.5 L2185.0 112 L2190.5 105.5" fill="none" stroke="#2b2b2b" stroke-width="2.6" stroke-linecap="round" stroke-linejoin="round"/><rect x="2253.5" y="81" width="55" height="55" fill="none" stroke="#c9553a" stroke-width="2.2"/><rect x="2258.5" y="85.5" width="20" height="19.5" fill="none" stroke="#c9553a" stroke-width="2.2"/><rect x="2284" y="85.5" width="20" height="19.5" fill="none" stroke="#c9553a" stroke-width="2.2"/><rect x="2258.5" y="111.5" width="20" height="19.5" fill="none" stroke="#c9553a" stroke-width="2.2"/><rect x="2284" y="111.5" width="20" height="19.5" fill="none" stroke="#c9553a" stroke-width="2.2"/><rect x="2381.5" y="77.5" width="61" height="61" fill="#fbfbfb" stroke="#2b2b2b" stroke-width="2.6"/><rect x="2383" y="79" width="58" height="6.5" fill="#c8c8c8"/><path d="M2381.5 86 H2442.5 M2381.5 104.5 H2390 M2428 104.5 H2442.5 M2381.5 120.5 H2396 M2420 120.5 H2442.5 M2401.5 124 V138.5 M2422.5 124 V130" stroke="#555" stroke-width="1.8"/><circle cx="2409" cy="103" r="18.5" fill="#fbfbfb" stroke="#2b2b2b" stroke-width="2.8"/><path d="M2422 116 L2442 137" stroke="#2b2b2b" stroke-width="3" stroke-linecap="round"/><rect x="2399.5" y="99" width="7" height="12" fill="#c8c8c8" stroke="#555" stroke-width="1.4"/><rect x="2406.5" y="91" width="7" height="20" fill="#fff" stroke="#2b2b2b" stroke-width="1.6"/><rect x="2413.5" y="94.5" width="7" height="16.5" fill="#7ab8ec" stroke="#1f6fb5" stroke-width="1.6"/><defs>
<linearGradient id="cpL" x1="0" y1="0" x2="0" y2="1"><stop offset="0" stop-color="#1aa0f0"/><stop offset="0.45" stop-color="#45b08a"/><stop offset="0.8" stop-color="#e8c41a"/><stop offset="1" stop-color="#f0a020"/></linearGradient>
<linearGradient id="cpR" x1="0" y1="0" x2="0" y2="1"><stop offset="0" stop-color="#b050e8"/><stop offset="0.5" stop-color="#f0508a"/><stop offset="1" stop-color="#f89a50"/></linearGradient>
<linearGradient id="cpT" x1="0" y1="0" x2="1" y2="0"><stop offset="0" stop-color="#2a70e0"/><stop offset="1" stop-color="#1040c0"/></linearGradient>
<linearGradient id="cpB" x1="0" y1="0" x2="1" y2="0"><stop offset="0" stop-color="#f04a20"/><stop offset="1" stop-color="#f88040"/></linearGradient>
</defs><path d="M2507 82 C2513 82 2515 86 2516 90 L2519 98 L2500 98 Z" fill="url(#cpT)"/><path d="M2487 82 H2509 C2504 84 2502 88 2500 96 L2491 126 C2489 131 2486 133 2481 133 H2476 C2471 133 2469 129 2470 124 L2479 90 C2481 85 2483 82 2487 82 Z" fill="url(#cpL)"/><path d="M2488 122 L2500 122 L2496 133 L2486 133 C2490 131 2491 128 2488 122 Z" fill="url(#cpB)"/><path d="M2503 94 H2524 C2529 94 2531 98 2530 103 L2521 127 C2519 131 2516 133 2512 133 H2491 C2495 131 2497 128 2499 122 L2508 98 C2509 95 2506 94 2503 94 Z" fill="url(#cpR)"/><rect x="2597.5" y="75.5" width="66" height="64" rx="6" fill="#e9ece9" opacity="0.55"/><rect x="2604.0" y="80.8" width="54.5" height="54.5" rx="7" fill="#218a4a" stroke="#dff5e4" stroke-width="0.8"/><path d="M2631.0 87.0 C2627.5 86.0 2623.5 87.5 2621.5 90.0 C2617.5 90.5 2615.0 93.5 2615.0 97.0 C2612.0 99.5 2611.5 103.5 2613.0 106.5 C2611.0 109.5 2612.0 113.5 2614.5 115.5 C2614.5 119.5 2617.5 122.5 2621.5 122.5 C2623.5 125.5 2627.5 126.5 2631.0 125.5 Z" fill="#e4f6e6"/><path d="M2632.5 89.0 C2636.5 88.5 2639.5 90.0 2641.0 92.5 C2643.5 93.5 2645.0 96.5 2644.5 99.5 C2646.5 101.5 2646.0 105.5 2644.5 107.5 L2632.5 107.5 Z" fill="#e4f6e6"/><path d="M2623.5 93.5 C2627.5 94.5 2628.5 98.5 2625.5 100.5 C2622.5 101.5 2620.5 99.5 2621.5 98.5 M2625.5 100.5 C2628.5 102.5 2628.5 107.5 2624.5 108.5 M2612.5 108.5 C2615.5 107.5 2616.5 106.5 2617.5 104.5 C2619.5 102.5 2621.5 103.5 2622.5 102.5 M2618.5 111.5 C2621.5 112.5 2624.5 114.5 2626.5 112.5 M2622.5 114.5 C2621.5 116.5 2621.5 118.5 2621.5 120.5 M2624.5 120.5 C2625.5 118.5 2627.5 117.5 2628.5 117.5 M2634.5 90.5 V97.5 H2641.5 M2634.5 103.5 C2636.5 102.5 2639.5 102.5 2641.5 103.5" fill="none" stroke="#2d6e45" stroke-width="1.5" stroke-linecap="round"/><rect x="2632.3" y="109.3" width="5.2" height="5.2" fill="#e4f6e6"/><rect x="2632.3" y="116.1" width="5.2" height="5.2" fill="#e4f6e6"/><rect x="2632.3" y="122.89999999999999" width="5.2" height="5.2" fill="#e4f6e6"/><rect x="2639.1000000000004" y="109.3" width="5.2" height="5.2" fill="#e4f6e6"/><rect x="2639.1000000000004" y="116.1" width="5.2" height="5.2" fill="#e4f6e6"/><rect x="2639.1000000000004" y="122.89999999999999" width="5.2" height="5.2" fill="#e4f6e6"/><rect x="2645.9" y="109.3" width="5.2" height="5.2" fill="#e4f6e6"/><rect x="2645.9" y="116.1" width="5.2" height="5.2" fill="#e4f6e6"/><rect x="2645.9" y="122.89999999999999" width="5.2" height="5.2" fill="#e4f6e6"/><rect x="2738.5" y="75.5" width="66" height="64" rx="6" fill="#e9ece9" opacity="0.55"/><rect x="2745.0" y="80.8" width="54.5" height="54.5" rx="7" fill="#218a4a" stroke="#dff5e4" stroke-width="0.8"/><path d="M2772.0 87.0 C2768.5 86.0 2764.5 87.5 2762.5 90.0 C2758.5 90.5 2756.0 93.5 2756.0 97.0 C2753.0 99.5 2752.5 103.5 2754.0 106.5 C2752.0 109.5 2753.0 113.5 2755.5 115.5 C2755.5 119.5 2758.5 122.5 2762.5 122.5 C2764.5 125.5 2768.5 126.5 2772.0 125.5 Z" fill="#e4f6e6"/><path d="M2773.5 89.0 C2777.5 88.5 2780.5 90.0 2782.0 92.5 C2784.5 93.5 2786.0 96.5 2785.5 99.5 C2787.5 101.5 2787.0 105.5 2785.5 107.5 L2773.5 107.5 Z" fill="#e4f6e6"/><path d="M2764.5 93.5 C2768.5 94.5 2769.5 98.5 2766.5 100.5 C2763.5 101.5 2761.5 99.5 2762.5 98.5 M2766.5 100.5 C2769.5 102.5 2769.5 107.5 2765.5 108.5 M2753.5 108.5 C2756.5 107.5 2757.5 106.5 2758.5 104.5 C2760.5 102.5 2762.5 103.5 2763.5 102.5 M2759.5 111.5 C2762.5 112.5 2765.5 114.5 2767.5 112.5 M2763.5 114.5 C2762.5 116.5 2762.5 118.5 2762.5 120.5 M2765.5 120.5 C2766.5 118.5 2768.5 117.5 2769.5 117.5 M2775.5 90.5 V97.5 H2782.5 M2775.5 103.5 C2777.5 102.5 2780.5 102.5 2782.5 103.5" fill="none" stroke="#2d6e45" stroke-width="1.5" stroke-linecap="round"/><rect x="2773.3" y="109.3" width="5.2" height="5.2" fill="#e4f6e6"/><rect x="2773.3" y="116.1" width="5.2" height="5.2" fill="#e4f6e6"/><rect x="2773.3" y="122.89999999999999" width="5.2" height="5.2" fill="#e4f6e6"/><rect x="2780.1000000000004" y="109.3" width="5.2" height="5.2" fill="#e4f6e6"/><rect x="2780.1000000000004" y="116.1" width="5.2" height="5.2" fill="#e4f6e6"/><rect x="2780.1000000000004" y="122.89999999999999" width="5.2" height="5.2" fill="#e4f6e6"/><rect x="2786.9" y="109.3" width="5.2" height="5.2" fill="#e4f6e6"/><rect x="2786.9" y="116.1" width="5.2" height="5.2" fill="#e4f6e6"/><rect x="2786.9" y="122.89999999999999" width="5.2" height="5.2" fill="#e4f6e6"/><path d="M2467 22 H2489 C2492 22 2494 24 2494 27 V40 C2494 43 2492 45 2489 45 H2474 L2467.5 49.5 V45 H2467 C2464 45 2462 43 2462 40 V27 C2462 24 2464 22 2467 22 Z" fill="none" stroke="#1e1e1e" stroke-width="2.4" stroke-linejoin="round"/><path d="M2707 25 H2697 C2695.5 25 2694.5 26 2694.5 27.5 V44 C2694.5 45.5 2695.5 46.5 2697 46.5 H2719 C2720.5 46.5 2721.5 45.5 2721.5 44 V39" fill="none" stroke="#fff" stroke-width="2.4" stroke-linecap="round"/><path d="M2702 40 C2703 32 2709 29 2715 29 V24 L2724 31.5 L2715 39 V34 C2710 34 2705 36 2702 40 Z" fill="none" stroke="#fff" stroke-width="2.4" stroke-linejoin="round"/><path d="M2821 32 L2828.5 39.5 L2836 32" fill="none" stroke="#fff" stroke-width="2.4" stroke-linecap="round" stroke-linejoin="round"/><path d="M145 231 L150.5 221.5 L156 231 Z M145 243 L150.5 253 L156 243 Z" fill="#666"/><path d="M191.5 232 L210 250.5 M210 232 L191.5 250.5" stroke="#c4c4c4" stroke-width="3.2"/><path d="M247 241 L255 250 L272 232" fill="none" stroke="#c4c4c4" stroke-width="3.2"/><text x="304" y="250" font-family="Liberation Serif" font-style="italic" font-size="31" fill="#333">fx</text><path d="M2839 234 L2853.5 234 L2846.2 244.5 Z" fill="#666"/></svg>
<div class="r" style="left:0px;top:263px;width:2858px;height:7px;background:#eeeeee;border-top:2px solid #bdbdbd;border-bottom:1px solid #c8c8c8;box-sizing:border-box"></div>
<div class="r" style="left:0px;top:270px;width:1392px;height:1212px;background:#ffffff"></div>
<div class="r" style="left:0px;top:270px;width:1392px;height:59px;background:#f3f3f3"></div>
<div class="r" style="left:1349px;top:270px;width:43px;height:59px;background:#f8f8f8"></div>
<div class="r" style="left:49px;top:326px;width:1300px;height:3px;background:#217346"></div>
<div class="r" style="left:1349px;top:328px;width:41px;height:2px;background:#c8c8c8"></div>
<div class="r" style="left:668px;top:272px;width:1px;height:54px;background:#dcdcdc"></div>
<div class="r" style="left:992px;top:272px;width:1px;height:54px;background:#dcdcdc"></div>
<div class="r" style="left:1348px;top:272px;width:1px;height:54px;background:#dcdcdc"></div>
<div class="t" style="left:352.0px;top:287.0px;font-size:26px;line-height:26px;color:#217346;font-weight:normal;font-style:normal;-webkit-text-stroke:0.3px #217346">A</div>
<div class="t" style="left:825.0px;top:287.0px;font-size:26px;line-height:26px;color:#217346;font-weight:normal;font-style:normal;-webkit-text-stroke:0.3px #217346">B</div>
<div class="t" style="left:1162.5px;top:287.0px;font-size:26px;line-height:26px;color:#217346;font-weight:normal;font-style:normal;-webkit-text-stroke:0.3px #217346">C</div>
<div class="r" style="left:0px;top:329px;width:49px;height:1153px;background:#f5f5f5"></div>
<div class="r" style="left:48px;top:329px;width:1px;height:1153px;background:#d6d6d6"></div>
<svg class="r" style="left:0px;top:279px" width="44" height="45"><polygon points="44,0 44,45 0,45" fill="#d9d9d9"/></svg>
<div class="r" style="left:51px;top:1210px;width:1295px;height:82px;background:#c6c6c6"></div>
<div class="r" style="left:668px;top:1170px;width:679px;height:40px;background:#c6c6c6"></div>
<div class="r" style="left:0px;top:369px;width:48px;height:1px;background:#dedede"></div>
<div class="t" style="left:0.0px;top:340.3px;font-size:26px;line-height:26px;color:#5a5a5a;font-weight:normal;font-style:normal;width:41px;text-align:center;letter-spacing:1.6px">8</div>
<div class="r" style="left:0px;top:411px;width:48px;height:1px;background:#dedede"></div>
<div class="t" style="left:0.0px;top:382.3px;font-size:26px;line-height:26px;color:#5a5a5a;font-weight:normal;font-style:normal;width:41px;text-align:center;letter-spacing:1.6px">9</div>
<div class="r" style="left:0px;top:453px;width:48px;height:1px;background:#dedede"></div>
<div class="t" style="left:0.0px;top:424.4px;font-size:26px;line-height:26px;color:#5a5a5a;font-weight:normal;font-style:normal;width:41px;text-align:center;letter-spacing:1.6px">10</div>
<div class="r" style="left:0px;top:495px;width:48px;height:1px;background:#dedede"></div>
<div class="t" style="left:0.0px;top:466.4px;font-size:26px;line-height:26px;color:#5a5a5a;font-weight:normal;font-style:normal;width:41px;text-align:center;letter-spacing:1.6px">11</div>
<div class="r" style="left:0px;top:537px;width:48px;height:1px;background:#dedede"></div>
<div class="t" style="left:0.0px;top:508.5px;font-size:26px;line-height:26px;color:#5a5a5a;font-weight:normal;font-style:normal;width:41px;text-align:center;letter-spacing:1.6px">12</div>
<div class="r" style="left:0px;top:579px;width:48px;height:1px;background:#dedede"></div>
<div class="t" style="left:0.0px;top:550.5px;font-size:26px;line-height:26px;color:#5a5a5a;font-weight:normal;font-style:normal;width:41px;text-align:center;letter-spacing:1.6px">13</div>
<div class="r" style="left:0px;top:621px;width:48px;height:1px;background:#dedede"></div>
<div class="t" style="left:0.0px;top:592.6px;font-size:26px;line-height:26px;color:#5a5a5a;font-weight:normal;font-style:normal;width:41px;text-align:center;letter-spacing:1.6px">14</div>
<div class="r" style="left:0px;top:663px;width:48px;height:1px;background:#dedede"></div>
<div class="t" style="left:0.0px;top:634.6px;font-size:26px;line-height:26px;color:#5a5a5a;font-weight:normal;font-style:normal;width:41px;text-align:center;letter-spacing:1.6px">15</div>
<div class="r" style="left:0px;top:705px;width:48px;height:1px;background:#dedede"></div>
<div class="t" style="left:0.0px;top:676.7px;font-size:26px;line-height:26px;color:#5a5a5a;font-weight:normal;font-style:normal;width:41px;text-align:center;letter-spacing:1.6px">16</div>
<div class="r" style="left:0px;top:747px;width:48px;height:1px;background:#dedede"></div>
<div class="t" style="left:0.0px;top:718.7px;font-size:26px;line-height:26px;color:#5a5a5a;font-weight:normal;font-style:normal;width:41px;text-align:center;letter-spacing:1.6px">17</div>
<div class="r" style="left:0px;top:789px;width:48px;height:1px;background:#dedede"></div>
<div class="t" style="left:0.0px;top:760.7px;font-size:26px;line-height:26px;color:#5a5a5a;font-weight:normal;font-style:normal;width:41px;text-align:center;letter-spacing:1.6px">18</div>
<div class="r" style="left:0px;top:831px;width:48px;height:1px;background:#dedede"></div>
<div class="t" style="left:0.0px;top:802.8px;font-size:26px;line-height:26px;color:#5a5a5a;font-weight:normal;font-style:normal;width:41px;text-align:center;letter-spacing:1.6px">19</div>
<div class="r" style="left:0px;top:873px;width:48px;height:1px;background:#dedede"></div>
<div class="t" style="left:0.0px;top:844.8px;font-size:26px;line-height:26px;color:#5a5a5a;font-weight:normal;font-style:normal;width:41px;text-align:center;letter-spacing:1.6px">20</div>
<div class="r" style="left:0px;top:915px;width:48px;height:1px;background:#dedede"></div>
<div class="t" style="left:0.0px;top:886.9px;font-size:26px;line-height:26px;color:#5a5a5a;font-weight:normal;font-style:normal;width:41px;text-align:center;letter-spacing:1.6px">21</div>
<div class="r" style="left:0px;top:957px;width:48px;height:1px;background:#dedede"></div>
<div class="t" style="left:0.0px;top:928.9px;font-size:26px;line-height:26px;color:#5a5a5a;font-weight:normal;font-style:normal;width:41px;text-align:center;letter-spacing:1.6px">22</div>
<div class="r" style="left:0px;top:1000px;width:48px;height:1px;background:#dedede"></div>
<div class="t" style="left:0.0px;top:971.0px;font-size:26px;line-height:26px;color:#5a5a5a;font-weight:normal;font-style:normal;width:41px;text-align:center;letter-spacing:1.6px">23</div>
<div class="r" style="left:0px;top:1042px;width:48px;height:1px;background:#dedede"></div>
<div class="t" style="left:0.0px;top:1013.0px;font-size:26px;line-height:26px;color:#5a5a5a;font-weight:normal;font-style:normal;width:41px;text-align:center;letter-spacing:1.6px">24</div>
<div class="r" style="left:0px;top:1084px;width:48px;height:1px;background:#dedede"></div>
<div class="t" style="left:0.0px;top:1055.1px;font-size:26px;line-height:26px;color:#5a5a5a;font-weight:normal;font-style:normal;width:41px;text-align:center;letter-spacing:1.6px">25</div>
<div class="r" style="left:0px;top:1126px;width:48px;height:1px;background:#dedede"></div>
<div class="t" style="left:0.0px;top:1097.1px;font-size:26px;line-height:26px;color:#5a5a5a;font-weight:normal;font-style:normal;width:41px;text-align:center;letter-spacing:1.6px">26</div>
<div class="r" style="left:0px;top:1168px;width:48px;height:1px;background:#dedede"></div>
<div class="t" style="left:0.0px;top:1139.1px;font-size:26px;line-height:26px;color:#5a5a5a;font-weight:normal;font-style:normal;width:41px;text-align:center;letter-spacing:1.6px">27</div>
<div class="r" style="left:0px;top:1210px;width:48px;height:1px;background:#dedede"></div>
<div class="t" style="left:0.0px;top:1181.2px;font-size:26px;line-height:26px;color:#1e7145;font-weight:normal;font-style:normal;width:41px;text-align:center;letter-spacing:1.6px">28</div>
<div class="r" style="left:0px;top:1252px;width:48px;height:1px;background:#dedede"></div>
<div class="t" style="left:0.0px;top:1223.2px;font-size:26px;line-height:26px;color:#1e7145;font-weight:normal;font-style:normal;width:41px;text-align:center;letter-spacing:1.6px">29</div>
<div class="r" style="left:0px;top:1294px;width:48px;height:1px;background:#dedede"></div>
<div class="t" style="left:0.0px;top:1265.3px;font-size:26px;line-height:26px;color:#1e7145;font-weight:normal;font-style:normal;width:41px;text-align:center;letter-spacing:1.6px">30</div>
<div class="r" style="left:0px;top:1336px;width:48px;height:1px;background:#dedede"></div>
<div class="t" style="left:0.0px;top:1307.3px;font-size:26px;line-height:26px;color:#5a5a5a;font-weight:normal;font-style:normal;width:41px;text-align:center;letter-spacing:1.6px">31</div>
<div class="r" style="left:0px;top:1378px;width:48px;height:1px;background:#dedede"></div>
<div class="t" style="left:0.0px;top:1349.4px;font-size:26px;line-height:26px;color:#5a5a5a;font-weight:normal;font-style:normal;width:41px;text-align:center;letter-spacing:1.6px">32</div>
<div class="r" style="left:0px;top:1420px;width:48px;height:1px;background:#dedede"></div>
<div class="t" style="left:0.0px;top:1391.4px;font-size:26px;line-height:26px;color:#5a5a5a;font-weight:normal;font-style:normal;width:41px;text-align:center;letter-spacing:1.6px">33</div>
<div class="r" style="left:0px;top:1462px;width:48px;height:1px;background:#dedede"></div>
<div class="t" style="left:0.0px;top:1433.5px;font-size:26px;line-height:26px;color:#5a5a5a;font-weight:normal;font-style:normal;width:41px;text-align:center;letter-spacing:1.6px">34</div>
<div class="r" style="left:0px;top:1504px;width:48px;height:1px;background:#dedede"></div>
<div class="t" style="left:0.0px;top:1475.5px;font-size:26px;line-height:26px;color:#5a5a5a;font-weight:normal;font-style:normal;width:41px;text-align:center;letter-spacing:1.6px">35</div>
<div class="t" style="left:54.0px;top:422.6px;font-size:27px;line-height:27px;color:#111111;font-weight:normal;font-style:normal;-webkit-text-stroke:0.35px #111">Income Statement</div>
<div class="t" style="left:674.5px;top:422.5px;font-size:27.1px;line-height:27.1px;color:#111111;font-weight:normal;font-style:normal;-webkit-text-stroke:0.35px #111">December 30, 2023 ($M)</div>
<div class="t" style="left:999.0px;top:422.5px;font-size:27.1px;line-height:27.1px;color:#111111;font-weight:normal;font-style:normal;-webkit-text-stroke:0.35px #111">December 31, 2022 ($M)</div>
<div class="t" style="left:54.0px;top:464.7px;font-size:27px;line-height:27px;color:#111111;font-weight:normal;font-style:normal;-webkit-text-stroke:0.35px #111">Net sales: Products</div>
<div class="t" style="right:1870.5px;top:464.3px;font-size:27.5px;line-height:27.5px;color:#111111;font-weight:normal;-webkit-text-stroke:0.35px #111">96,458</div>
<div class="t" style="right:1514.5px;top:464.3px;font-size:27.5px;line-height:27.5px;color:#111111;font-weight:normal;-webkit-text-stroke:0.35px #111">96,388</div>
<div class="t" style="left:54.0px;top:506.7px;font-size:27px;line-height:27px;color:#111111;font-weight:normal;font-style:normal;-webkit-text-stroke:0.35px #111">Net sales: Services</div>
<div class="t" style="right:1870.5px;top:506.3px;font-size:27.5px;line-height:27.5px;color:#111111;font-weight:normal;-webkit-text-stroke:0.35px #111">23,117</div>
<div class="t" style="right:1514.5px;top:506.3px;font-size:27.5px;line-height:27.5px;color:#111111;font-weight:normal;-webkit-text-stroke:0.35px #111">20,766</div>
<div class="t" style="left:54.0px;top:548.8px;font-size:27px;line-height:27px;color:#111111;font-weight:normal;font-style:normal;-webkit-text-stroke:0.35px #111">Total net sales</div>
<div class="t" style="right:1870.5px;top:548.3px;font-size:27.5px;line-height:27.5px;color:#111111;font-weight:normal;-webkit-text-stroke:0.35px #111">119,575</div>
<div class="t" style="right:1514.5px;top:548.3px;font-size:27.5px;line-height:27.5px;color:#111111;font-weight:normal;-webkit-text-stroke:0.35px #111">117,154</div>
<div class="t" style="left:54.0px;top:590.8px;font-size:27px;line-height:27px;color:#111111;font-weight:normal;font-style:normal;-webkit-text-stroke:0.35px #111">Cost of sales: Products</div>
<div class="t" style="right:1870.5px;top:590.4px;font-size:27.5px;line-height:27.5px;color:#111111;font-weight:normal;-webkit-text-stroke:0.35px #111">58,440</div>
<div class="t" style="right:1514.5px;top:590.4px;font-size:27.5px;line-height:27.5px;color:#111111;font-weight:normal;-webkit-text-stroke:0.35px #111">60,765</div>
<div class="t" style="left:54.0px;top:632.9px;font-size:27px;line-height:27px;color:#111111;font-weight:normal;font-style:normal;-webkit-text-stroke:0.35px #111">Cost of sales: Services</div>
<div class="t" style="right:1870.5px;top:632.4px;font-size:27.5px;line-height:27.5px;color:#111111;font-weight:normal;-webkit-text-stroke:0.35px #111">6,280</div>
<div class="t" style="right:1514.5px;top:632.4px;font-size:27.5px;line-height:27.5px;color:#111111;font-weight:normal;-webkit-text-stroke:0.35px #111">6,057</div>
<div class="t" style="left:54.0px;top:674.9px;font-size:27px;line-height:27px;color:#111111;font-weight:normal;font-style:normal;-webkit-text-stroke:0.35px #111">Total cost of sales</div>
<div class="t" style="right:1870.5px;top:674.5px;font-size:27.5px;line-height:27.5px;color:#111111;font-weight:normal;-webkit-text-stroke:0.35px #111">64,720</div>
<div class="t" style="right:1514.5px;top:674.5px;font-size:27.5px;line-height:27.5px;color:#111111;font-weight:normal;-webkit-text-stroke:0.35px #111">66,822</div>
<div class="t" style="left:54.0px;top:716.9px;font-size:27px;line-height:27px;color:#111111;font-weight:normal;font-style:normal;-webkit-text-stroke:0.35px #111">Gross margin</div>
<div class="t" style="right:1870.5px;top:716.5px;font-size:27.5px;line-height:27.5px;color:#111111;font-weight:normal;-webkit-text-stroke:0.35px #111">54,855</div>
<div class="t" style="right:1514.5px;top:716.5px;font-size:27.5px;line-height:27.5px;color:#111111;font-weight:normal;-webkit-text-stroke:0.35px #111">50,332</div>
<div class="t" style="left:54.0px;top:759.0px;font-size:27px;line-height:27px;color:#111111;font-weight:normal;font-style:normal;-webkit-text-stroke:0.35px #111">Operating expenses: Research and development</div>
<div class="t" style="right:1870.5px;top:758.6px;font-size:27.5px;line-height:27.5px;color:#111111;font-weight:normal;-webkit-text-stroke:0.35px #111">7,696</div>
<div class="t" style="right:1514.5px;top:758.6px;font-size:27.5px;line-height:27.5px;color:#111111;font-weight:normal;-webkit-text-stroke:0.35px #111">7,709</div>
<div class="t" style="left:54.0px;top:801.0px;font-size:27px;line-height:27px;color:#111111;font-weight:normal;font-style:normal;-webkit-text-stroke:0.35px #111">Operating expenses: Selling, general and admin</div>
<div class="t" style="right:1870.5px;top:800.6px;font-size:27.5px;line-height:27.5px;color:#111111;font-weight:normal;-webkit-text-stroke:0.35px #111">6,786</div>
<div class="t" style="right:1514.5px;top:800.6px;font-size:27.5px;line-height:27.5px;color:#111111;font-weight:normal;-webkit-text-stroke:0.35px #111">6,607</div>
<div class="t" style="left:54.0px;top:843.1px;font-size:27px;line-height:27px;color:#111111;font-weight:normal;font-style:normal;-webkit-text-stroke:0.35px #111">Total operating expenses</div>
<div class="t" style="right:1870.5px;top:842.7px;font-size:27.5px;line-height:27.5px;color:#111111;font-weight:normal;-webkit-text-stroke:0.35px #111">14,482</div>
<div class="t" style="right:1514.5px;top:842.7px;font-size:27.5px;line-height:27.5px;color:#111111;font-weight:normal;-webkit-text-stroke:0.35px #111">14,316</div>
<div class="t" style="left:54.0px;top:885.1px;font-size:27px;line-height:27px;color:#111111;font-weight:normal;font-style:normal;-webkit-text-stroke:0.35px #111">Operating income</div>
<div class="t" style="right:1870.5px;top:884.7px;font-size:27.5px;line-height:27.5px;color:#111111;font-weight:normal;-webkit-text-stroke:0.35px #111">40,373</div>
<div class="t" style="right:1514.5px;top:884.7px;font-size:27.5px;line-height:27.5px;color:#111111;font-weight:normal;-webkit-text-stroke:0.35px #111">36,016</div>
<div class="t" style="left:54.0px;top:927.2px;font-size:27px;line-height:27px;color:#111111;font-weight:normal;font-style:normal;-webkit-text-stroke:0.35px #111">Other income/(expense), net</div>
<div class="t" style="right:1870.5px;top:926.8px;font-size:27.5px;line-height:27.5px;color:#111111;font-weight:normal;-webkit-text-stroke:0.35px #111">-50</div>
<div class="t" style="right:1514.5px;top:926.8px;font-size:27.5px;line-height:27.5px;color:#111111;font-weight:normal;-webkit-text-stroke:0.35px #111">-393</div>
<div class="t" style="left:54.0px;top:969.2px;font-size:27px;line-height:27px;color:#111111;font-weight:normal;font-style:normal;-webkit-text-stroke:0.35px #111">Income before provision for income taxes</div>
<div class="t" style="right:1870.5px;top:968.8px;font-size:27.5px;line-height:27.5px;color:#111111;font-weight:normal;-webkit-text-stroke:0.35px #111">40,323</div>
<div class="t" style="right:1514.5px;top:968.8px;font-size:27.5px;line-height:27.5px;color:#111111;font-weight:normal;-webkit-text-stroke:0.35px #111">35,623</div>
<div class="t" style="left:54.0px;top:1011.3px;font-size:27px;line-height:27px;color:#111111;font-weight:normal;font-style:normal;-webkit-text-stroke:0.35px #111">Provision for income taxes</div>
<div class="t" style="right:1870.5px;top:1010.8px;font-size:27.5px;line-height:27.5px;color:#111111;font-weight:normal;-webkit-text-stroke:0.35px #111">6,407</div>
<div class="t" style="right:1514.5px;top:1010.8px;font-size:27.5px;line-height:27.5px;color:#111111;font-weight:normal;-webkit-text-stroke:0.35px #111">5,625</div>
<div class="t" style="left:54.0px;top:1053.3px;font-size:27px;line-height:27px;color:#111111;font-weight:normal;font-style:normal;-webkit-text-stroke:0.35px #111">Net income</div>
<div class="t" style="right:1870.5px;top:1052.9px;font-size:27.5px;line-height:27.5px;color:#111111;font-weight:normal;-webkit-text-stroke:0.35px #111">33,916</div>
<div class="t" style="right:1514.5px;top:1052.9px;font-size:27.5px;line-height:27.5px;color:#111111;font-weight:normal;-webkit-text-stroke:0.35px #111">29,998</div>
<div class="t" style="left:54.0px;top:1095.4px;font-size:27px;line-height:27px;color:#111111;font-weight:normal;font-style:normal;-webkit-text-stroke:0.35px #111">Earnings per share: Basic ($)</div>
<div class="t" style="right:1870.5px;top:1094.9px;font-size:27.5px;line-height:27.5px;color:#111111;font-weight:normal;-webkit-text-stroke:0.35px #111">2.19</div>
<div class="t" style="right:1514.5px;top:1094.9px;font-size:27.5px;line-height:27.5px;color:#111111;font-weight:normal;-webkit-text-stroke:0.35px #111">1.89</div>
<div class="t" style="left:54.0px;top:1179.4px;font-size:27px;line-height:27px;color:#111111;font-weight:normal;font-style:normal;-webkit-text-stroke:0.35px #111">Ratio</div>
<div class="t" style="left:54.0px;top:1221.5px;font-size:27px;line-height:27px;color:#111111;font-weight:normal;font-style:normal;-webkit-text-stroke:0.35px #111">Gross Profit Margin</div>
<div class="t" style="right:1870.5px;top:1221.1px;font-size:27.5px;line-height:27.5px;color:#111111;font-weight:normal;-webkit-text-stroke:0.35px #111">45.87%</div>
<div class="t" style="right:1514.5px;top:1221.1px;font-size:27.5px;line-height:27.5px;color:#111111;font-weight:normal;-webkit-text-stroke:0.35px #111">42.96%</div>
<div class="t" style="left:54.0px;top:1263.5px;font-size:27px;line-height:27px;color:#111111;font-weight:normal;font-style:normal;-webkit-text-stroke:0.35px #111">Operating Margin</div>
<div class="t" style="right:1870.5px;top:1263.1px;font-size:27.5px;line-height:27.5px;color:#111111;font-weight:normal;-webkit-text-stroke:0.35px #111">33.76%</div>
<div class="t" style="right:1514.5px;top:1263.1px;font-size:27.5px;line-height:27.5px;color:#111111;font-weight:normal;-webkit-text-stroke:0.35px #111">30.74%</div>
<div class="r" style="left:669px;top:1169px;width:323px;height:42px;overflow:hidden">
<div class="t" style="left:5.5px;top:8.6px;font-size:27.1px;line-height:27px;color:#111;-webkit-text-stroke:0.35px #111">December 30, 2023 Formula</div></div>
<div class="r" style="left:993px;top:1169px;width:356px;height:42px;overflow:hidden">
<div class="t" style="left:6px;top:8.6px;font-size:27.1px;line-height:27px;color:#111;-webkit-text-stroke:0.35px #111">December 31, 2022 Formula</div></div>
<div class="r" style="left:49px;top:453px;width:1300px;height:2px;background:#111"></div>
<div class="r" style="left:46px;top:1166px;width:1306px;height:132px;border:3px solid #217346;border-left-width:4px;border-bottom-width:4px;box-sizing:border-box"></div>
<div class="r" style="left:1342px;top:1289px;width:12px;height:12px;background:#217346;border:1px solid #fff;box-sizing:border-box"></div>
<div class="r" style="left:54px;top:1462px;width:691px;height:14px;background:#a3a3a3;border-radius:7px"></div>
<div class="r" style="left:0px;top:1482px;width:1392px;height:30px;background:#f3f3f3;border-top:1px solid #d0d0d0;box-sizing:border-box"></div>
<div class="r" style="left:111px;top:1482px;width:225px;height:30px;background:#efefef;border-left:1px solid #d4d4d4;border-top:1px solid #d0d0d0;box-sizing:border-box"></div>
<div class="r" style="left:336px;top:1482px;width:279px;height:30px;background:#efefef;border-left:1px solid #d4d4d4;border-right:1px solid #d4d4d4;border-top:1px solid #d0d0d0;box-sizing:border-box"></div>
<div class="r" style="left:615px;top:1481px;width:279px;height:31px;background:#ffffff"></div>
<div class="r" style="left:894px;top:1482px;width:197px;height:30px;background:#efefef;border-left:1px solid #d4d4d4;border-right:1px solid #d4d4d4;border-top:1px solid #d0d0d0;box-sizing:border-box"></div>
<div class="r" style="left:1091px;top:1482px;width:76px;height:30px;background:#efefef;border-right:1px solid #d4d4d4;border-top:1px solid #d0d0d0;box-sizing:border-box"></div>
<div class="t" style="left:146.7px;top:1495.9px;font-size:24.3px;line-height:24.3px;color:#8a8a8a;font-weight:normal;font-style:normal;">WebResearch</div>
<div class="t" style="left:375.3px;top:1495.9px;font-size:24.3px;line-height:24.3px;color:#555555;font-weight:normal;font-style:normal;">PDFImageToExcel</div>
<div class="t" style="left:653.4px;top:1496.9px;font-size:23.2px;line-height:23.2px;color:#217346;font-weight:bold;font-style:normal;">Financial Analysis</div>
<div class="t" style="left:930.7px;top:1495.3px;font-size:25.1px;line-height:25.1px;color:#555555;font-weight:normal;font-style:normal;">Accounting</div>
<svg class="r" style="left:1117px;top:1495px" width="26" height="20"><path d="M13 2.5 V22 M3 10.5 H23" stroke="#555" stroke-width="3.2"/></svg>
<div class="r" style="left:1390px;top:270px;width:1468px;height:1242px;background:#fdfdfd"></div>
<div class="r" style="left:1390px;top:270px;width:2px;height:1242px;background:#c4c4c4"></div>
<div class="r" style="left:1392px;top:270px;width:1466px;height:53px;background:#ebebeb"></div>
<div class="r" style="left:1392px;top:323px;width:1466px;height:34px;background:#f6f7f8;border-bottom:1px solid #dcdcdc;box-sizing:border-box"></div>
<div class="t" style="left:1426.5px;top:282.3px;font-size:29.8px;line-height:29.8px;color:#1e1e1e;font-weight:normal;font-style:normal;-webkit-text-stroke:0.9px #1e1e1e;letter-spacing:0.5px">Excellent AI</div>
<svg class="r" style="left:2810px;top:283px" width="28" height="28"><circle cx="14" cy="14" r="14" fill="#5f5f5f"/><path d="M9 9 L19 19 M19 9 L9 19" stroke="#fff" stroke-width="2.4" stroke-linecap="round"/></svg>
<div class="r" style="left:1421px;top:387px;width:1420px;height:890px;background:#ffffff;border-radius:30px 30px 0 0;box-shadow:0 0 12px rgba(0,0,0,0.035)"></div>
<div class="r" style="left:2822px;top:388px;width:17px;height:850px;background:#f1f1f1;border-radius:8px"></div>
<div class="r" style="left:2839px;top:357px;width:19px;height:1155px;background:#f8f8f8"></div>
<div class="r" style="left:2823px;top:680px;width:16px;height:293px;background:#c1c1c1;border-radius:8px"></div>
<div class="r" style="left:1644px;top:387px;width:1159px;height:77px;background:#f7f7f7;border-radius:0 0 22px 22px;box-shadow:0 1px 2px rgba(0,0,0,0.10)"></div>
<div class="r" style="left:1644px;top:387px;width:1080px;height:77px;background:#efefef;border-radius:0 0 22px 22px"></div>
<div class="t" style="left:1667.0px;top:400.1px;font-size:28px;line-height:28px;color:#262626;font-weight:normal;font-style:normal;">FY24<i>Q1</i>Consolidated<i>Financial</i>Statements.pdf)</div>
<div class="r" style="left:2593px;top:414px;width:52px;height:52px;border-radius:26px;background:#fff;box-shadow:0 1px 4px rgba(0,0,0,0.12)"></div>
<div class="r" style="left:2681px;top:414px;width:52px;height:52px;border-radius:26px;background:#fff;box-shadow:0 1px 4px rgba(0,0,0,0.12)"></div>
<div class="r" style="left:2769px;top:414px;width:52px;height:52px;border-radius:26px;background:#fff;box-shadow:0 1px 4px rgba(0,0,0,0.12)"></div>
<svg class="r" style="left:2599px;top:420px" width="40" height="40"><path d="M20 7.5 V32.5 M7 20 H33" stroke="#1f1f1f" stroke-width="2.8" stroke-linecap="round"/></svg>
<svg class="r" style="left:2687px;top:420px" width="40" height="40"><circle cx="20" cy="20" r="17" fill="none" stroke="#1f1f1f" stroke-width="3"/><path d="M20 10 V20 L27 25" fill="none" stroke="#1f1f1f" stroke-width="3" stroke-linecap="round" stroke-linejoin="round"/></svg>
<svg class="r" style="left:2775px;top:420px" width="40" height="40"><path d="M30.21 17.55 L34.37 18.07 L34.37 21.93 L30.21 22.45 L28.95 25.49 L31.53 28.80 L28.80 31.53 L25.49 28.95 L22.45 30.21 L21.93 34.37 L18.07 34.37 L17.55 30.21 L14.51 28.95 L11.20 31.53 L8.47 28.80 L11.05 25.49 L9.79 22.45 L5.63 21.93 L5.63 18.07 L9.79 17.55 L11.05 14.51 L8.47 11.20 L11.20 8.47 L14.51 11.05 L17.55 9.79 L18.07 5.63 L21.93 5.63 L22.45 9.79 L25.49 11.05 L28.80 8.47 L31.53 11.20 L28.95 14.51 Z" fill="none" stroke="#1f1f1f" stroke-width="2.6" stroke-linejoin="round"/><circle cx="20" cy="20" r="4.6" fill="none" stroke="#1f1f1f" stroke-width="2.6"/><path d="M31 28 L37 34 L33.5 35 Z" fill="#1f1f1f"/></svg>
<div class="r" style="left:2806px;top:337px;width:60px;height:51px;background:#717171;border-radius:12px"></div>
<div class="t" style="left:2827.0px;top:346.5px;font-size:36px;line-height:36px;color:#ffffff;font-weight:bold;font-style:italic;font-family:'Liberation Serif',serif">i</div>
<div class="r" style="left:1444px;top:543px;width:948px;height:216px;background:#fff;border:2px solid #e0e0e0;border-radius:8px;box-sizing:border-box"></div>
<div class="r" style="left:1446px;top:545px;width:944px;height:64px;background:#f8f8f8"></div>
<div class="r" style="left:1446px;top:609px;width:944px;height:64px;background:#ffffff"></div>
<div class="r" style="left:1446px;top:673px;width:944px;height:64px;background:#f9f9f9"></div>
<div class="r" style="left:1446px;top:545px;width:944px;height:2px;background:#e3e3e3"></div>
<div class="r" style="left:1446px;top:608px;width:944px;height:2px;background:#e3e3e3"></div>
<div class="r" style="left:1446px;top:672px;width:944px;height:2px;background:#e3e3e3"></div>
<div class="r" style="left:1446px;top:736px;width:944px;height:2px;background:#e3e3e3"></div>
<div class="r" style="left:1446px;top:545px;width:2px;height:193px;background:#e3e3e3"></div>
<div class="r" style="left:1686px;top:545px;width:2px;height:193px;background:#e3e3e3"></div>
<div class="r" style="left:2037px;top:545px;width:2px;height:193px;background:#e3e3e3"></div>
<div class="r" style="left:2388px;top:545px;width:2px;height:193px;background:#e3e3e3"></div>
<div class="t" style="left:1464.3px;top:564.5px;font-size:23px;line-height:23px;color:#262626;font-weight:bold;font-style:normal;">Ratio</div>
<div class="t" style="left:1704.0px;top:563.8px;font-size:23.9px;line-height:23.9px;color:#262626;font-weight:bold;font-style:normal;">December 30, 2023 Formula</div>
<div class="t" style="left:2055.3px;top:563.8px;font-size:23.9px;line-height:23.9px;color:#262626;font-weight:bold;font-style:normal;">December 31, 2022 Formula</div>
<div class="t" style="left:1464.3px;top:627.9px;font-size:23.7px;line-height:23.7px;color:#333333;font-weight:normal;font-style:normal;">Gross Profit Margin</div>
<div class="t" style="left:1703.6px;top:627.9px;font-size:23.7px;line-height:23.7px;color:#333333;font-weight:normal;font-style:normal;">=B17/B13</div>
<div class="t" style="left:2055.3px;top:627.9px;font-size:23.7px;line-height:23.7px;color:#333333;font-weight:normal;font-style:normal;">=C17/C13</div>
<div class="t" style="left:1464.3px;top:691.9px;font-size:23.7px;line-height:23.7px;color:#333333;font-weight:normal;font-style:normal;">Operating Margin</div>
<div class="t" style="left:1703.6px;top:691.9px;font-size:23.7px;line-height:23.7px;color:#333333;font-weight:normal;font-style:normal;">=B21/B13</div>
<div class="t" style="left:2055.3px;top:691.9px;font-size:23.7px;line-height:23.7px;color:#333333;font-weight:normal;font-style:normal;">=C21/C13</div>
<div class="r" style="left:1983px;top:781px;width:211px;height:53px;background:#5ea2e0;border-radius:7px"></div>
<div class="t" style="left:2007.8px;top:795.2px;font-size:25.8px;line-height:25.8px;color:#ffffff;font-weight:normal;font-style:normal;">Table Applied!</div>
<div class="r" style="left:2210px;top:780px;width:184px;height:55px;background:#ffffff;border-radius:7px;box-shadow:0 1px 3px rgba(0,0,0,0.12)"></div>
<div class="t" style="left:2234.7px;top:795.2px;font-size:25.8px;line-height:25.8px;color:#262626;font-weight:normal;font-style:normal;">Undo Apply</div>
<div class="r" style="left:1643px;top:881px;width:1160px;height:146px;background:#f7f7f7;border:1px solid #dddddd;border-radius:18px;box-sizing:border-box;box-shadow:0 1px 2px rgba(0,0,0,0.06)"></div>
<div class="r" style="left:1644px;top:882px;width:1080px;height:144px;background:#efefef;border-radius:17px"></div>
<div class="t" style="left:1665.0px;top:920.1px;font-size:28px;line-height:28px;color:#262626;font-weight:normal;font-style:normal;">write-up one line summary for what changed from 22 to 23 (with file:</div>
<div class="t" style="left:1665.0px;top:963.3px;font-size:28px;line-height:28px;color:#262626;font-weight:normal;font-style:normal;">FY24<i>Q1</i>Consolidated<i>Financial</i>Statements.pdf)</div>
<div class="t" style="left:1443.0px;top:1092.3px;font-size:28px;line-height:28px;color:#262626;font-weight:normal;font-style:normal;">Based on the provided data, from 2022 to 2023, the company saw improved profitability with</div>
<div class="t" style="left:1443.0px;top:1136.3px;font-size:28px;line-height:28px;color:#262626;font-weight:normal;font-style:normal;">Net Income increasing from $29,998M to $33,916M and Basic Earnings Per Share rising</div>
<div class="t" style="left:1443.0px;top:1180.3px;font-size:28px;line-height:28px;color:#262626;font-weight:normal;font-style:normal;">from $1.89 to $2.19, alongside increases in key profit margins.</div>
<div class="r" style="left:1421px;top:1269px;width:1420px;height:80px;background:#f7f7f7;border-bottom:2px solid #e2e2e2;box-sizing:border-box"></div>
<div class="r" style="left:1440px;top:1288px;width:413px;height:48px;background:#ebebeb;border:2px solid #d2d2d2;border-radius:24px;box-sizing:border-box"></div>
<div class="r" style="left:1459px;top:1299px;width:27px;height:26px;background:#333333;border-radius:4px"></div>
<div class="t" style="left:1511.8px;top:1302.6px;font-size:21px;line-height:21px;color:#262626;font-weight:normal;font-style:normal;letter-spacing:0.72px">'Financial Analysis'!A28:C30</div>
<svg class="r" style="left:1821px;top:1307px" width="13" height="13"><path d="M1 1 L12 12 M12 1 L1 12" stroke="#333" stroke-width="2"/></svg>
<div class="r" style="left:1866px;top:1288px;width:436px;height:48px;overflow:hidden;background:#ebebeb;border:2px solid #d2d2d2;border-radius:24px;box-sizing:border-box">
<div class="t" style="left:37.7px;top:11px;font-size:21px;line-height:21px;color:#262626;letter-spacing:0.45px">FY24_Q1_Consolidated_Financial_Statements.pdf</div></div>
<div class="r" style="left:1423px;top:1367px;width:1414px;height:135px;background:#ffffff;border-radius:14px;box-shadow:0 0 6px rgba(0,0,0,0.06)"></div>
<div class="r" style="left:1447px;top:1388px;width:1188px;height:91px;background:#ffffff;border:3px solid #2f76c2;border-radius:46px;box-sizing:border-box;box-shadow:0 0 0 3px rgba(47,118,194,0.25)"></div>
<div class="r" style="left:1479.5px;top:1418px;width:3.5px;height:30px;background:#2a7a48;border-radius:1.5px"></div>
<div class="t" style="left:1482.0px;top:1418.5px;font-size:28.1px;line-height:28.1px;color:#707070;font-weight:normal;font-style:italic;">Ask about the selected cells...</div>
<svg class="r" style="left:0;top:0" width="2858" height="1512"><path d="M9 -6 V12 A9 9 0 0 1 -9 12 V-16 A6 6 0 0 1 3 -16 V8 A3 3 0 0 1 -3 8 V-12" fill="none" stroke="#444" stroke-width="2.4" stroke-linecap="round" transform="translate(2701 1435.5) rotate(51) scale(1.02)"/><path d="M2783 1448 V1424 M2770.5 1436 L2783 1423.5 L2795.5 1436" fill="none" stroke="#444" stroke-width="2.8" stroke-linecap="round" stroke-linejoin="round"/><path d="M20 1506 L34 1498.5 L34 1514 Z" fill="#4d4d4d"/><path d="M80 1506 L66.5 1498.5 L66.5 1514 Z" fill="#b0b0b0"/></svg>
</body></html>
